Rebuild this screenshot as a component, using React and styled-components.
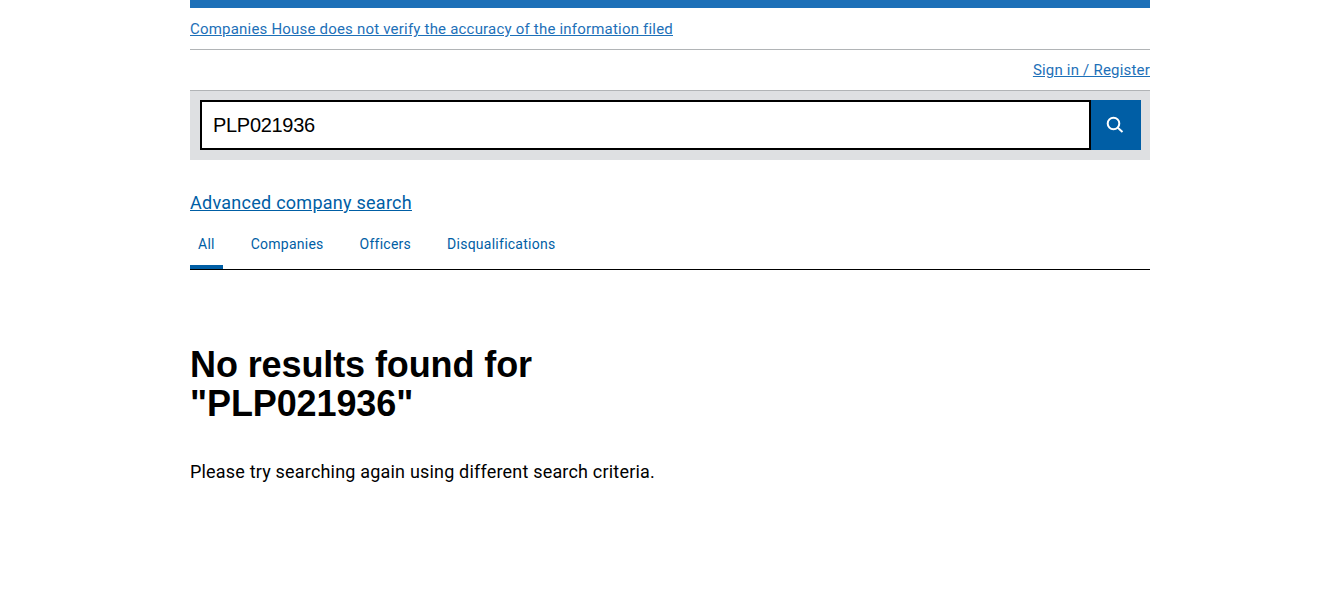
import React from 'react';
import styled, { createGlobalStyle } from 'styled-components';

const GlobalStyle = createGlobalStyle`
  html, body {
    margin: 0;
    padding: 0;
    background: #fff;
    color: #000;
    font-family: 'Roboto', 'Liberation Sans', sans-serif;
  }
`;

const Page = styled.div`
  width: 960px;
  margin-left: 190px;
  height: 611px;
  overflow: hidden;
`;

const TopBar = styled.div`
  height: 8px;
  background: #1d70b8;
`;

const Notice = styled.div`
  height: 42px;
  box-sizing: border-box;
  padding-top: 11px;
  border-bottom: 1px solid #b1b4b6;
  font-size: 15px;
  line-height: 20px;
`;

const TextLink = styled.a`
  color: ${({ $dark }) => ($dark ? '#005ea5' : '#1d70b8')};
  text-decoration: underline;
  letter-spacing: ${({ $spacing }) => $spacing || '0.2px'};
`;

const SignIn = styled.div`
  height: 40px;
  box-sizing: border-box;
  padding-top: 10px;
  text-align: right;
  font-size: 15px;
  line-height: 20px;
`;

const SearchBox = styled.form`
  display: flex;
  box-sizing: border-box;
  height: 70px;
  padding: 9px 9px 10px 10px;
  margin: 0;
  background: #dee0e2;
  border-top: 1px solid #b1b4b6;
`;

const SearchInput = styled.input`
  flex: 1;
  min-width: 0;
  box-sizing: border-box;
  height: 50px;
  padding: 0 11px;
  border: 2px solid #000;
  border-radius: 0;
  outline: none;
  background: #fff;
  color: #000;
  font-family: 'Liberation Sans', Arial, sans-serif;
  font-size: 20px;
  letter-spacing: -0.3px;
`;

const SearchButton = styled.button`
  display: flex;
  align-items: center;
  justify-content: center;
  width: 50px;
  height: 50px;
  padding: 0 3px 0 0;
  border: 0;
  background: #005ea5;
`;

const Advanced = styled.div`
  margin-top: 32px;
  font-size: 18px;
  line-height: 22px;
`;

const Tabs = styled.ul`
  display: flex;
  list-style: none;
  margin: 12px 0 0;
  padding: 0;
  height: 43px;
  border-bottom: 1px solid #000;
`;

const Tab = styled.li`
  box-sizing: border-box;
  height: 43px;
  padding: 9px 8px 0;
  margin-right: 20px;
  font-size: 14px;
  line-height: 18px;
  letter-spacing: 0.25px;
  color: #005ea5;
  border-bottom: 4px solid ${({ $active }) => ($active ? '#005ea5' : 'transparent')};
`;

const Heading = styled.h1`
  width: 480px;
  margin: 75px 0 0;
  font-family: 'Liberation Sans', Arial, sans-serif;
  font-size: 36px;
  line-height: 39px;
  font-weight: 700;
  letter-spacing: -0.1px;
  color: #000;
`;

const Message = styled.p`
  margin: 37px 0 0;
  font-size: 18px;
  line-height: 24px;
  letter-spacing: 0.19px;
  color: #000;
`;

const SearchIcon = () => (
  <svg width="18" height="18" viewBox="0 0 18 18" fill="none" stroke="#fff" aria-hidden="true">
    <circle cx="7.5" cy="7.5" r="5.8" strokeWidth="2" />
    <path d="M11.8 11.8l4.7 4.2" strokeWidth="2" />
  </svg>
);

export default function App() {
  return (
    <>
      <GlobalStyle />
      <Page>
        <TopBar />
        <Notice>
          <TextLink href="#">Companies House does not verify the accuracy of the information filed</TextLink>
        </Notice>
        <SignIn>
          <TextLink href="#">Sign in / Register</TextLink>
        </SignIn>
        <SearchBox onSubmit={(event) => event.preventDefault()}>
          <SearchInput type="text" defaultValue="PLP021936" />
          <SearchButton type="submit" aria-label="Search">
            <SearchIcon />
          </SearchButton>
        </SearchBox>
        <Advanced>
          <TextLink href="#" $dark $spacing="0.26px">Advanced company search</TextLink>
        </Advanced>
        <Tabs>
          <Tab $active>All</Tab>
          <Tab>Companies</Tab>
          <Tab>Officers</Tab>
          <Tab>Disqualifications</Tab>
        </Tabs>
        <Heading>No results found for "PLP021936"</Heading>
        <Message>Please try searching again using different search criteria.</Message>
      </Page>
    </>
  );
}
